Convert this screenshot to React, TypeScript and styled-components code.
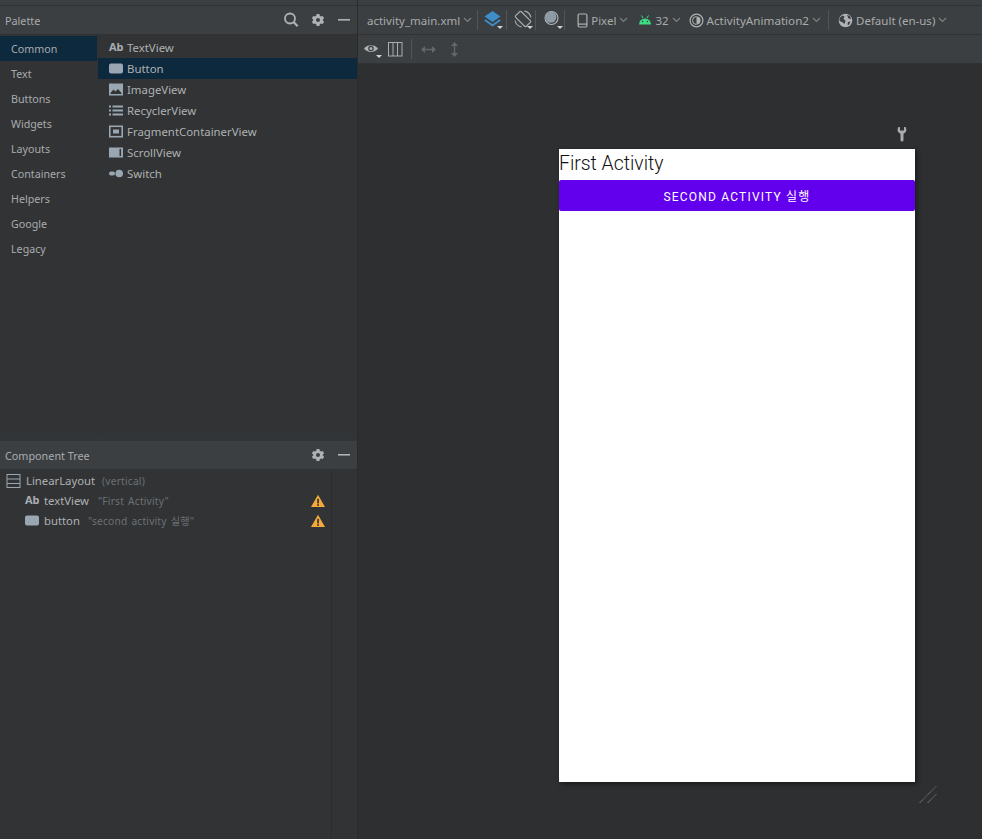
import React from "react";
import styled, { createGlobalStyle } from "styled-components";

const Global = createGlobalStyle`
  html, body { margin: 0; padding: 0; background: #2d2f30; }
  #root { width: 982px; height: 839px; overflow: hidden; }
`;

const Page = styled.div`
  width: 982px; height: 839px; display: flex; overflow: hidden;
  font-family: "Noto Sans", "Noto Sans CJK KR", sans-serif;
  font-size: 12px; color: #bbbbbb; background: #2d2f30;
`;
const Side = styled.aside`
  width: 357px; flex: none; display: flex; flex-direction: column;
  border-right: 1px solid #2b2b2b; background: #313335;
`;
const TopStrip = styled.div`
  height: 5px; flex: none; background: #3c3f41; border-bottom: 1px solid #323232;
`;
const PanelHeader = styled.header`
  height: 28px; flex: none; display: flex; align-items: center; background: #3c3f41;
  padding: 0 6px 0 5px; border-bottom: 1px solid #323232; gap: 12px;
`;
const PanelTitle = styled.span`
  flex: 1; font-size: 10.8px; color: #a9abad; line-height: 16px; padding-top: 2px;
`;
const PaletteBody = styled.div`
  height: 399px; flex: none; display: flex; background: #313335;
`;
const Categories = styled.nav`
  width: 97px; flex: none; display: flex; flex-direction: column; padding-top: 1px;
  border-right: 1px solid #2f3234;
`;
const Category = styled.div<{ $active?: boolean }>`
  height: 25px; flex: none; padding-left: 11px; display: flex; align-items: center;
  font-size: 10.7px; color: #a9abad; background: ${(p) => (p.$active ? "#0d293e" : "transparent")};
`;
const Widgets = styled.div`
  flex: 1; display: flex; flex-direction: column; padding-top: 2px;
`;
const Widget = styled.div<{ $active?: boolean }>`
  height: 21px; flex: none; display: flex; align-items: center; gap: 4px; padding-left: 11px;
  font-size: 11.4px; color: #afb1b3; background: ${(p) => (p.$active ? "#0d293e" : "transparent")};
`;
const Splitter = styled.div`
  height: 7px; flex: none; margin-bottom: -1px; background: #323537; border-bottom: 1px solid #2b2d2e;
`;
const TreeBody = styled.div`
  flex: 1; display: flex; background: #313335;
`;
const TreeList = styled.div`
  width: 331px; flex: none; display: flex; flex-direction: column; padding-top: 1px;
  border-right: 1px solid #2b2d2e;
`;
const TreeRow = styled.div<{ $indent: number; $gap: number }>`
  height: 20px; flex: none; display: flex; align-items: center; gap: ${(p) => p.$gap}px; position: relative;
  padding-left: ${(p) => p.$indent}px; font-size: 11.3px; line-height: 16px; color: #afb1b3;
`;
const TreeHint = styled.span<{ $ml?: number }>`
  color: #6d7174; font-size: 10.2px; line-height: 16px; margin-left: ${(p) => p.$ml ?? 4}px;
  letter-spacing: 0.2px; word-spacing: 1.2px;
`;
const TreeWarn = styled.span`
  position: absolute; left: 311px; top: 3px; display: flex;
`;
const Main = styled.main`
  flex: 1; display: flex; flex-direction: column; min-width: 0;
`;
const Toolbar = styled.div<{ $left?: number }>`
  height: 28px; flex: none; display: flex; align-items: center; background: #3c3f41;
  border-bottom: 1px solid #323232; padding-left: ${(p) => p.$left ?? 9}px;
`;
const ToolText = styled.span<{ $size?: number }>`
  font-size: ${(p) => p.$size ?? 11.5}px; color: #a9abad; white-space: nowrap; padding-top: 1px;
`;
const Group = styled.div<{ $gap?: number; $ml?: number }>`
  display: flex; align-items: center; gap: ${(p) => p.$gap ?? 3}px; margin-left: ${(p) => p.$ml ?? 0}px;
`;
const Sep = styled.div<{ $ml: number; $mr: number; $h?: number }>`
  width: 1px; height: ${(p) => p.$h ?? 20}px; background: #515558; flex: none;
  margin: 0 ${(p) => p.$mr}px 0 ${(p) => p.$ml}px;
`;
const Canvas = styled.div`
  flex: 1; position: relative; background: #2d2f30; display: flex; flex-direction: column;
  padding: 85px 0 0 201px;
`;
const Device = styled.div`
  width: 356px; height: 633px; background: #ffffff; display: flex; flex-direction: column;
  box-shadow: 2px 2px 5px rgba(0,0,0,.45);
`;
const Heading = styled.div`
  height: 31px; flex: none; font-family: Roboto, sans-serif; font-size: 19.4px; font-weight: 300; line-height: 30px; color: #111;
`;
const PrimaryButton = styled.div`
  height: 31px; flex: none; background: #6200ee; border-radius: 2px; color: #fff; padding-bottom: 1px; box-sizing: border-box;
  display: flex; align-items: center; justify-content: center;
  font-family: Roboto, "Noto Sans CJK KR", sans-serif; font-size: 12px; font-weight: 400; letter-spacing: 1.2px;
`;
const Wrench = styled.span`
  position: absolute; left: 539px; top: 62px; display: flex;
`;
const Resize = styled.span`
  position: absolute; left: 561px; top: 721px; display: flex;
`;

const Icon = ({ children, w = 16, h = 16 }: { children: React.ReactNode; w?: number; h?: number }) => (
  <svg width={w} height={h} viewBox={`0 0 ${w} ${h}`} style={{ flex: "none", display: "block" }}>{children}</svg>
);
const Chev = () => (
  <Icon w={9} h={6}><path d="M1 1 L4.5 4.5 L8 1" fill="none" stroke="#7d8083" strokeWidth="1.2" /></Icon>
);
const Tri = ({ x, y }: { x: number; y: number }) => <path d={`M${x} ${y}h6l-3 3z`} fill="#cfd1d3" />;
const Gear = () => (
  <Icon w={14} h={14}>
    <path fillRule="evenodd" fill="#afb1b3" d="M5.6 1h2.8l.4 1.7 1.2.7 1.7-.5 1.4 2.4-1.3 1.2v1l1.3 1.2-1.4 2.4-1.7-.5-1.2.7-.4 1.700H5.600l-.4-1.700-1.200-.7-1.700.5L.9 8.700l1.300-1.200v-1L.9 5.300l1.400-2.400 1.700.5 1.200-.7zM7 5a2 2 0 1 0 0 4 2 2 0 0 0 0-4z" />
  </Icon>
);
const Minus = () => (
  <Icon w={14} h={14}><rect x="1" y="6" width="12" height="1.6" fill="#afb1b3" /></Icon>
);
const Search = () => (
  <Icon w={16} h={16}>
    <circle cx="7" cy="6.500" r="5" fill="none" stroke="#afb1b3" strokeWidth="1.800" />
    <path d="M10.500 10l4.200 4.200" stroke="#afb1b3" strokeWidth="2.200" />
  </Icon>
);
const AbIcon = () => (
  <span style={{ width: 14, fontFamily: "'Noto Sans', sans-serif", fontWeight: 700, fontSize: 11, color: "#a8adb3", lineHeight: "14px", flex: "none", position: "relative", top: -1 }}>Ab</span>
);
const ButtonIcon = () => (
  <Icon w={14} h={14}><rect x="0" y="1.500" width="14" height="10" rx="2" fill="#9aa7b3" /></Icon>
);
const ImageIcon = () => (
  <Icon w={14} h={14}>
    <rect x="0" y="0.500" width="14" height="12" fill="#9aa7b3" />
    <path d="M1.500 10l3-3.500 2 2 2.500-2.500 3.500 4z" fill="#313335" />
    <rect x="1.500" y="10" width="11" height="1" fill="#313335" />
  </Icon>
);
const ListIcon = () => (
  <Icon w={14} h={14}>
    <g fill="#9aa7b3">
      <rect x="0" y="1.500" width="2" height="2" /><rect x="3.500" y="1.500" width="10.500" height="2" />
      <rect x="0" y="5.500" width="2" height="2" /><rect x="3.500" y="5.500" width="10.500" height="2" />
      <rect x="0" y="9.500" width="2" height="2" /><rect x="3.500" y="9.500" width="10.500" height="2" />
    </g>
  </Icon>
);
const FragmentIcon = () => (
  <Icon w={14} h={14}>
    <rect x=".8" y="1.300" width="12.400" height="10.400" fill="none" stroke="#9aa7b3" strokeWidth="1.600" />
    <rect x="4" y="4.500" width="6" height="4" fill="#9aa7b3" />
  </Icon>
);
const ScrollIcon = () => (
  <Icon w={14} h={14}>
    <rect x="0" y="1.500" width="14" height="10" fill="#9aa7b3" /><rect x="10.500" y="3" width="1.600" height="7" fill="#313335" />
  </Icon>
);
const SwitchIcon = () => (
  <Icon w={14} h={14}>
    <rect x="0" y="4.500" width="6" height="4" rx="2" fill="#9aa7b3" /><circle cx="10.200" cy="6.500" r="3.800" fill="#9aa7b3" />
  </Icon>
);
const LinearIcon = () => (
  <Icon w={15} h={16}>
    <rect x="1" y="1.500" width="13" height="13" fill="none" stroke="#9aa7b3" />
    <path d="M1 6h13M1 10.500h13" stroke="#9aa7b3" />
  </Icon>
);
const Warn = () => (
  <Icon w={14} h={14}>
    <path d="M7 .8 L14 13 H0 Z" fill="#f4a93a" />
    <rect x="6.200" y="4.800" width="1.700" height="4.600" fill="#313335" /><rect x="6.200" y="10.200" width="1.700" height="1.700" fill="#313335" />
  </Icon>
);
const Layers = () => (
  <Icon w={19} h={20}>
    <path d="M8.500 1l8 5.500-8 5.500-8-5.500z" fill="#3d8ec9" />
    <path d="M.8 10l7.700 5.300 7.700-5.300" fill="none" stroke="#3d8ec9" strokeWidth="1.800" />
    <Tri x={13} y={16} />
  </Icon>
);
const Rotate = () => (
  <Icon w={20} h={20}>
    <g fill="none" stroke="#a9abad" strokeWidth="1.200">
      <rect x="5" y="1.500" width="8" height="15" rx="1.200" transform="rotate(-45 9 9)" />
      <path d="M10.500 1.100A8 8 0 0 1 16.900 7.500M7.500 16.900A8 8 0 0 1 1.100 10.500" />
    </g>
    <Tri x={13} y={16} />
  </Icon>
);
const Theme = () => (
  <Icon w={20} h={20}>
    <circle cx="7.500" cy="8" r="6.500" fill="none" stroke="#b4b6b8" strokeWidth="1.100" />
    <circle cx="6.800" cy="7.200" r="5.600" fill="#8d9ba7" />
    <Tri x={13} y={16} />
  </Icon>
);
const Phone = () => (
  <Icon w={11} h={15}>
    <rect x="1.100" y="1" width="8.800" height="13" rx="1.200" fill="none" stroke="#afb1b3" strokeWidth="1.200" />
    <rect x="1.100" y="10.500" width="8.800" height="1.200" fill="#afb1b3" />
  </Icon>
);
const Android = () => (
  <Icon w={14} h={12}>
    <path d="M1 10.500a6 6 0 0 1 12 0z" fill="#3ddc84" />
    <path d="M3.500 1.500l1.500 2.500M10.500 1.500L9 4" stroke="#3ddc84" strokeWidth="1" />
    <circle cx="4.600" cy="7.500" r=".8" fill="#3c3f41" /><circle cx="9.400" cy="7.500" r=".8" fill="#3c3f41" />
  </Icon>
);
const Contrast = () => (
  <Icon w={15} h={15}>
    <circle cx="7.500" cy="7.500" r="6.400" fill="none" stroke="#afb1b3" strokeWidth="1.200" />
    <path d="M7.500 3.500a4 4 0 0 1 0 8z" fill="#afb1b3" />
    <path d="M7.500 3.500a4 4 0 0 0 0 8" fill="none" stroke="#afb1b3" />
  </Icon>
);
const Globe = () => (
  <Icon w={15} h={15}>
    <circle cx="7.500" cy="7.500" r="6.800" fill="#afb1b3" />
    <path d="M1.500 5l3-2.500 2 1-1 2.500 2 1.500-1 3.500L4 9 1.500 8zM9 2l3 1 1 3-2.500-.5zM10 9l2.500-.5L11 12l-1.500-.5z" fill="#3c3f41" />
  </Icon>
);
const Eye = () => (
  <Icon w={18} h={22}>
    <path d="M0 10.500C3 6 11 6 14 10.500 11 15 3 15 0 10.500z" fill="#afb1b3" />
    <circle cx="7" cy="10.500" r="2.800" fill="#3c3f41" /><circle cx="7" cy="10.500" r="1.500" fill="#afb1b3" />
    <Tri x={12} y={17} />
  </Icon>
);
const Columns = () => (
  <Icon w={15} h={15}>
    <rect x=".5" y=".5" width="13.500" height="13.500" fill="none" stroke="#a9abad" />
    <path d="M5 .5v13.500M9.500 .5v13.500" stroke="#a9abad" />
  </Icon>
);
const HArrow = () => (
  <Icon w={15} h={9}>
    <path d="M3 4.500h9" stroke="#63676a" strokeWidth="1.400" />
    <path d="M0 4.500L4 1v7zM15 4.500L11 1v7z" fill="#63676a" />
  </Icon>
);
const VArrow = () => (
  <Icon w={9} h={15}>
    <path d="M4.500 3v9" stroke="#63676a" strokeWidth="1.400" />
    <path d="M4.500 0L8 4H1zM4.500 15L8 11H1z" fill="#63676a" />
  </Icon>
);

const categories = ["Common", "Text", "Buttons", "Widgets", "Layouts", "Containers", "Helpers", "Google", "Legacy"];
const widgets: [string, React.ReactNode][] = [
  ["TextView", <AbIcon />],
  ["Button", <ButtonIcon />],
  ["ImageView", <ImageIcon />],
  ["RecyclerView", <ListIcon />],
  ["FragmentContainerView", <FragmentIcon />],
  ["ScrollView", <ScrollIcon />],
  ["Switch", <SwitchIcon />],
];

export default function App() {
  return (
    <Page>
      <Global />
      <Side>
        <TopStrip />
        <PanelHeader>
          <PanelTitle>Palette</PanelTitle>
          <Search /><Gear /><Minus />
        </PanelHeader>
        <PaletteBody>
          <Categories>
            {categories.map((c, i) => <Category key={c} $active={i === 0}>{c}</Category>)}
          </Categories>
          <Widgets>
            {widgets.map(([n, ic], i) => (
              <Widget key={n} $active={i === 1}>{ic}{n}</Widget>
            ))}
          </Widgets>
        </PaletteBody>
        <Splitter />
        <PanelHeader>
          <PanelTitle>Component Tree</PanelTitle>
          <Gear /><Minus />
        </PanelHeader>
        <TreeBody>
          <TreeList>
            <TreeRow $indent={6} $gap={5}><LinearIcon /><span>LinearLayout</span><TreeHint $ml={2}>(vertical)</TreeHint></TreeRow>
            <TreeRow $indent={25} $gap={5}><AbIcon /><span>textView</span><TreeHint>"First Activity"</TreeHint><TreeWarn><Warn /></TreeWarn></TreeRow>
            <TreeRow $indent={25} $gap={5}><ButtonIcon /><span>button</span><TreeHint $ml={3}>"second activity 실행"</TreeHint><TreeWarn><Warn /></TreeWarn></TreeRow>
          </TreeList>
        </TreeBody>
      </Side>
      <Main>
        <TopStrip />
        <Toolbar>
          <Group><ToolText>activity_main.xml</ToolText><Chev /></Group>
          <Sep $ml={5} $mr={6} />
          <Layers />
          <Sep $ml={3} $mr={7} />
          <Rotate />
          <Sep $ml={1} $mr={8} />
          <Theme />
          <Sep $ml={0} $mr={12} />
          <Group $gap={3}><Phone /><ToolText>Pixel</ToolText><Chev /></Group>
          <Group $gap={3} $ml={10}><Android /><ToolText>32</ToolText><Chev /></Group>
          <Group $gap={3} $ml={8}><Contrast /><ToolText $size={11.65}>ActivityAnimation2</ToolText><Chev /></Group>
          <Sep $ml={7} $mr={9} />
          <Group $gap={3}><Globe /><ToolText>Default (en-us)</ToolText><Chev /></Group>
        </Toolbar>
        <Toolbar $left={6}>
          <Eye />
          <Group $ml={6}><Columns /></Group>
          <Sep $ml={8} $mr={9} />
          <HArrow />
          <Group $ml={14}><VArrow /></Group>
        </Toolbar>
        <Canvas>
          <Wrench>
            <Icon w={10} h={16}>
              <path d="M1.500 1 C.2 3 0 6 3.500 7.800 V14 a1.500 1.500 0 0 0 3 0 V7.800 C10 6 9.800 3 8.500 1 L7 1 V4.500 H3 V1 Z" fill="#a9abad" />
            </Icon>
          </Wrench>
          <Device>
            <Heading>First Activity</Heading>
            <PrimaryButton>SECOND ACTIVITY 실행</PrimaryButton>
          </Device>
          <Resize>
            <Icon w={19} h={19}>
              <path d="M.5 18L17.500 1M8.500 18L17.500 9" stroke="#8a8c8e" strokeWidth="1" strokeDasharray="1 .6" />
            </Icon>
          </Resize>
        </Canvas>
      </Main>
    </Page>
  );
}
